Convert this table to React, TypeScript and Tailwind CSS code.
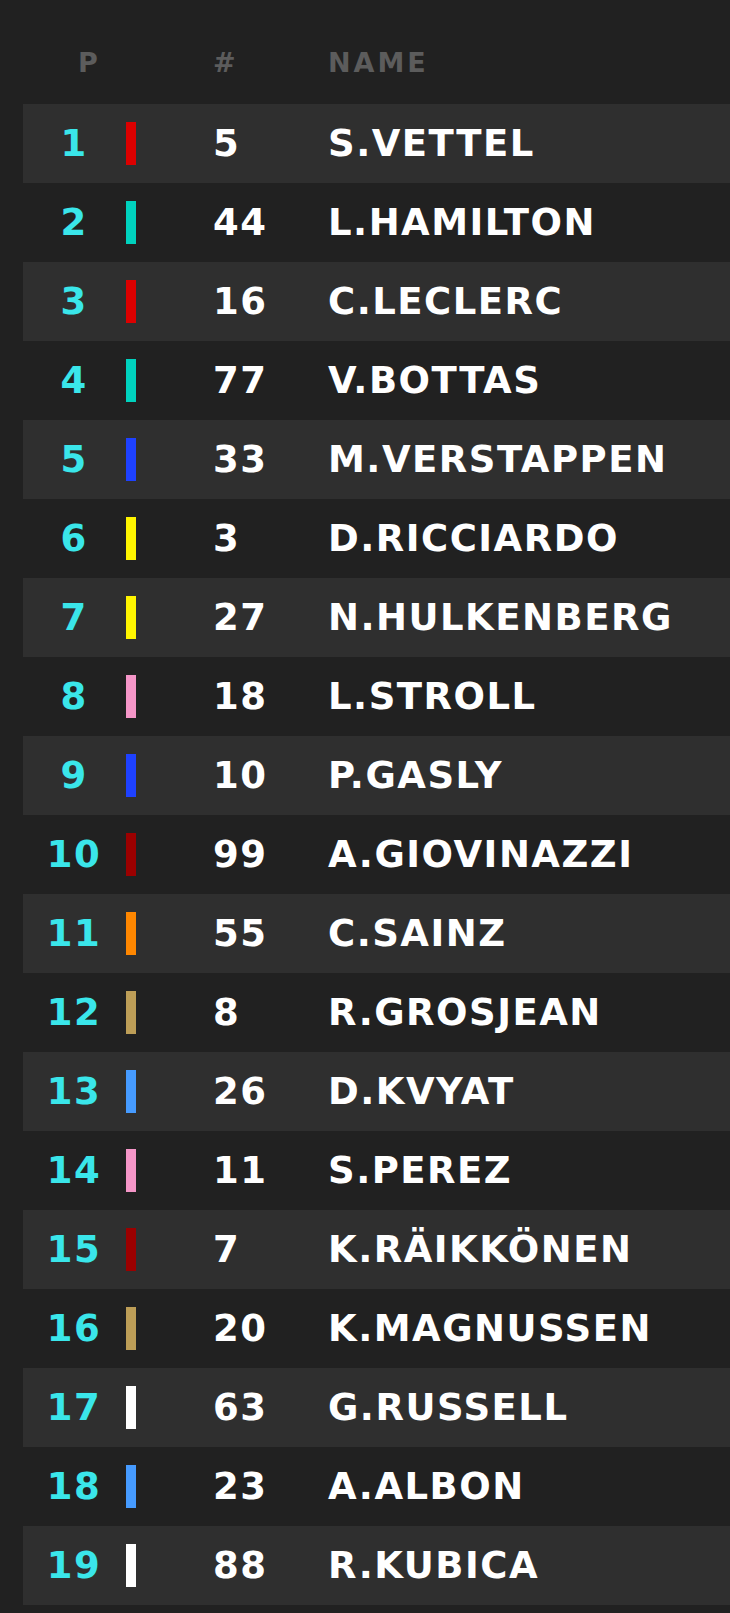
import React from 'react'

// Race classification — position, team colour stripe, car number and driver.

type Driver = { pos: number; num: number; name: string; team: string }

const TEAM: Record<string, string> = {
  ferrari: 'bg-[#dc0000]',
  mercedes: 'bg-[#00d2be]',
  redbull: 'bg-[#1e41ff]',
  renault: 'bg-[#fff500]',
  racingpoint: 'bg-[#f596c8]',
  alfa: 'bg-[#9b0000]',
  mclaren: 'bg-[#ff8700]',
  haas: 'bg-[#bd9e57]',
  tororosso: 'bg-[#469bff]',
  williams: 'bg-[#ffffff]',
}

const DRIVERS: Driver[] = [
  { pos: 1, num: 5, name: 'S.VETTEL', team: 'ferrari' },
  { pos: 2, num: 44, name: 'L.HAMILTON', team: 'mercedes' },
  { pos: 3, num: 16, name: 'C.LECLERC', team: 'ferrari' },
  { pos: 4, num: 77, name: 'V.BOTTAS', team: 'mercedes' },
  { pos: 5, num: 33, name: 'M.VERSTAPPEN', team: 'redbull' },
  { pos: 6, num: 3, name: 'D.RICCIARDO', team: 'renault' },
  { pos: 7, num: 27, name: 'N.HULKENBERG', team: 'renault' },
  { pos: 8, num: 18, name: 'L.STROLL', team: 'racingpoint' },
  { pos: 9, num: 10, name: 'P.GASLY', team: 'redbull' },
  { pos: 10, num: 99, name: 'A.GIOVINAZZI', team: 'alfa' },
  { pos: 11, num: 55, name: 'C.SAINZ', team: 'mclaren' },
  { pos: 12, num: 8, name: 'R.GROSJEAN', team: 'haas' },
  { pos: 13, num: 26, name: 'D.KVYAT', team: 'tororosso' },
  { pos: 14, num: 11, name: 'S.PEREZ', team: 'racingpoint' },
  { pos: 15, num: 7, name: 'K.RÄIKKÖNEN', team: 'alfa' },
  { pos: 16, num: 20, name: 'K.MAGNUSSEN', team: 'haas' },
  { pos: 17, num: 63, name: 'G.RUSSELL', team: 'williams' },
  { pos: 18, num: 23, name: 'A.ALBON', team: 'tororosso' },
  { pos: 19, num: 88, name: 'R.KUBICA', team: 'williams' },
]

function Row({ d, striped }: { d: Driver; striped: boolean }) {
  return (
    <li
      className={`ml-[23px] flex h-[79px] items-center text-[37px] font-bold leading-none tracking-[1.5px] ${
        striped ? 'bg-[#2f2f2f]' : ''
      }`}
    >
      <span className="w-[102px] text-center text-[#3ae6ea]">{d.pos}</span>
      <span className={`ml-[1px] h-[43px] w-[10px] ${TEAM[d.team]}`} />
      <span className="ml-[77px] w-[115px] text-white">{d.num}</span>
      <span className="whitespace-nowrap text-white">{d.name}</span>
    </li>
  )
}

export default function App() {
  return (
    <div
      className="h-[1613px] w-full overflow-hidden bg-[#212121]"
      style={{ fontFamily: '"DejaVu Sans", "Liberation Sans", sans-serif' }}
    >
      <div className="flex h-[104px] items-center pl-[78px] pt-[20px] text-[27px] font-bold leading-none tracking-[3px] text-[#5c5c5c]">
        <span className="w-[135px]">P</span>
        <span className="w-[115px]">#</span>
        <span>NAME</span>
      </div>
      <ol>
        {DRIVERS.map((d, i) => (
          <Row key={d.pos} d={d} striped={i % 2 === 0} />
        ))}
      </ol>
    </div>
  )
}
